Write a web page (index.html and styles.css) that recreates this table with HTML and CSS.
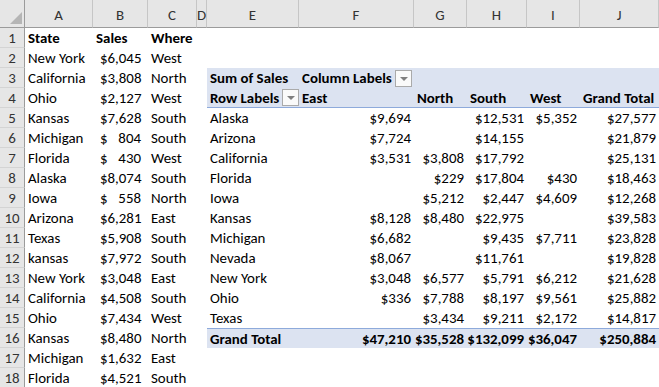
FILE: index.html
```html
<!DOCTYPE html>
<html lang="en">
<head>
    <meta charset="UTF-8">
    <title>Sales Pivot</title>
    <link rel="stylesheet" href="styles.css">
</head>
<body>
    <div class="sheet" id="sheet">
        <div class="corner"><span class="corner-mark"></span></div>
        <div class="col-head">A</div>
        <div class="col-head">B</div>
        <div class="col-head">C</div>
        <div class="col-head">D</div>
        <div class="col-head">E</div>
        <div class="col-head">F</div>
        <div class="col-head">G</div>
        <div class="col-head">H</div>
        <div class="col-head">I</div>
        <div class="col-head">J</div>
    </div>

    <script>
        // Source data in A:C
        const source = [
            ['New York', '6,045', 'West'],
            ['California', '3,808', 'North'],
            ['Ohio', '2,127', 'West'],
            ['Kansas', '7,628', 'South'],
            ['Michigan', '804', 'South'],
            ['Florida', '430', 'West'],
            ['Alaska', '8,074', 'South'],
            ['Iowa', '558', 'North'],
            ['Arizona', '6,281', 'East'],
            ['Texas', '5,908', 'South'],
            ['kansas', '7,972', 'South'],
            ['New York', '3,048', 'East'],
            ['California', '4,508', 'South'],
            ['Ohio', '7,434', 'West'],
            ['Kansas', '8,480', 'North'],
            ['Michigan', '1,632', 'East'],
            ['Florida', '4,521', 'South']
        ];

        // Pivot body: state, East, North, South, West, Grand Total
        const pivot = [
            ['Alaska', '$9,694', '', '$12,531', '$5,352', '$27,577'],
            ['Arizona', '$7,724', '', '$14,155', '', '$21,879'],
            ['California', '$3,531', '$3,808', '$17,792', '', '$25,131'],
            ['Florida', '', '$229', '$17,804', '$430', '$18,463'],
            ['Iowa', '', '$5,212', '$2,447', '$4,609', '$12,268'],
            ['Kansas', '$8,128', '$8,480', '$22,975', '', '$39,583'],
            ['Michigan', '$6,682', '', '$9,435', '$7,711', '$23,828'],
            ['Nevada', '$8,067', '', '$11,761', '', '$19,828'],
            ['New York', '$3,048', '$6,577', '$5,791', '$6,212', '$21,628'],
            ['Ohio', '$336', '$7,788', '$8,197', '$9,561', '$25,882'],
            ['Texas', '', '$3,434', '$9,211', '$2,172', '$14,817']
        ];
        const totals = ['Grand Total', '$47,210', '$35,528', '$132,099', '$36,047', '$250,884'];

        const sheet = document.getElementById('sheet');
        const dropdown = '<span class="filter-btn"></span>';

        function addCell(html, className) {
            const cell = document.createElement('div');
            cell.className = 'cell ' + (className || '');
            cell.innerHTML = html || '';
            sheet.appendChild(cell);
        }

        function money(value) {
            return '<span>$</span><span>' + value + '</span>';
        }

        for (let row = 1; row <= 18; row++) {
            addCell(row, 'row-head');

            // A:C
            if (row === 1) {
                addCell('State', 'bold');
                addCell('Sales', 'bold');
                addCell('Where', 'bold');
            } else {
                const item = source[row - 2];
                addCell(item[0]);
                addCell(money(item[1]), 'acct');
                addCell(item[2]);
            }

            // D
            addCell('');

            // E:J pivot
            if (row === 3) {
                addCell('Sum of Sales', 'bold pv');
                addCell('<span>Column Labels</span>' + dropdown, 'bold pv label-cell');
                for (let i = 0; i < 4; i++) addCell('', 'pv');
            } else if (row === 4) {
                addCell('<span>Row Labels</span>' + dropdown, 'bold pv pv-head label-cell');
                ['East', 'North', 'South', 'West', 'Grand Total'].forEach(function (name) {
                    addCell(name, 'bold pv pv-head');
                });
            } else if (row >= 5 && row <= 15) {
                const item = pivot[row - 5];
                addCell(item[0]);
                for (let i = 1; i < 6; i++) addCell(item[i], 'num');
            } else if (row === 16) {
                addCell(totals[0], 'bold pv pv-total');
                for (let i = 1; i < 6; i++) addCell(totals[i], 'bold pv pv-total num');
            } else {
                for (let i = 0; i < 6; i++) addCell('');
            }
        }
    </script>
</body>
</html>
```

FILE: styles.css
```css
html, body {
    margin: 0;
    padding: 0;
    background-color: #fff;
    overflow: hidden;
}
body {
    font-family: "Carlito", "Lato", sans-serif;
    font-size: 14.9px;
    color: #000;
}
.sheet {
    display: grid;
    grid-template-columns: 25px 68px 55px 49px 10px 92px 115px 53px 60px 53px 79px;
    grid-template-rows: 28px;
    grid-auto-rows: 20px;
    width: 659px;
}
.corner {
    position: relative;
    background-color: #e6e6e6;
    border-right: 1px solid #9b9b9b;
    border-bottom: 1px solid #9b9b9b;
    box-sizing: border-box;
}
.corner-mark {
    position: absolute;
    right: 2px;
    bottom: 3px;
    width: 0;
    height: 0;
    border-left: 12px solid transparent;
    border-bottom: 12px solid #b5b5b5;
}
.col-head {
    background-color: #e6e6e6;
    border-right: 1px solid #c6c6c6;
    border-bottom: 1px solid #9b9b9b;
    box-sizing: border-box;
    display: flex;
    align-items: center;
    justify-content: center;
    color: #333;
    padding-top: 2px;
}
.cell {
    display: flex;
    align-items: center;
    padding: 0 3px;
    white-space: nowrap;
    overflow: visible;
    box-sizing: border-box;
}
.row-head {
    background-color: #e6e6e6;
    border-right: 1px solid #9b9b9b;
    border-bottom: 1px solid #d4d4d4;
    justify-content: center;
    color: #333;
    padding: 0;
}
.bold {
    font-weight: bold;
}
.acct {
    justify-content: space-between;
    padding: 0 7px;
}
.num {
    justify-content: flex-end;
}
.pv {
    background-color: #dce3f1;
}
.pv-head {
    border-bottom: 1px solid #8eaadb;
}
.pv-total {
    border-top: 1px solid #8eaadb;
}
.label-cell {
    gap: 3px;
}
.label-cell.pv-head {
    justify-content: space-between;
    padding-right: 0;
}
.filter-btn {
    position: relative;
    width: 15px;
    height: 15px;
    background-color: #fafafa;
    border: 1px solid #aaa;
    flex-shrink: 0;
}
.filter-btn::after {
    content: "";
    position: absolute;
    left: 4px;
    top: 6px;
    border-left: 4px solid transparent;
    border-right: 4px solid transparent;
    border-top: 4px solid #7f7f7f;
}
```
